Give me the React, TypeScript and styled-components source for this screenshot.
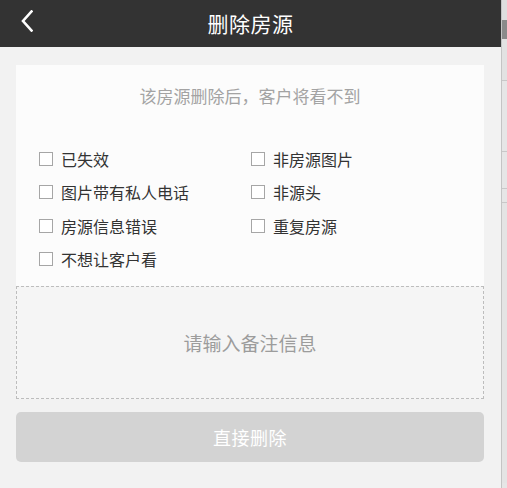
import React from "react";
import styled, { createGlobalStyle } from "styled-components";

const Global = createGlobalStyle`
  html, body { margin: 0; padding: 0; background: #f2f2f2; }
  body { font-family: "Noto Sans CJK SC", "Noto Sans", sans-serif; }
  * { box-sizing: border-box; }
`;

const Frame = styled.div`
  display: flex;
  width: 507px;
  height: 488px;
  overflow: hidden;
`;

const Page = styled.div`
  width: 501px;
  height: 488px;
  background: #f2f2f2;
  display: flex;
  flex-direction: column;
`;

const Strip = styled.div`
  width: 6px;
  height: 488px;
  display: flex;
  flex-direction: column;
  background: #e6e6e6;
  border-left: 1px solid #c4c4c4;
`;

const StripSeg = styled.div<{ $h: number; $bg: string; $line?: boolean }>`
  height: ${(p) => p.$h}px;
  background: ${(p) => p.$bg};
  border-bottom: ${(p) => (p.$line ? "1px solid #c8c8c8" : "none")};
  flex-shrink: 0;
`;

const Header = styled.header`
  height: 47px;
  background: #333333;
  display: flex;
  align-items: center;
  justify-content: center;
  position: relative;
  flex-shrink: 0;
`;

const Back = styled.button`
  position: absolute;
  left: 19px;
  top: 8px;
  width: 16px;
  height: 26px;
  padding: 0;
  border: 0;
  background: transparent;
  display: flex;
  align-items: center;
  justify-content: center;
`;

const Title = styled.h1`
  margin: 0;
  font-size: 21px;
  font-weight: 400;
  color: #ffffff;
  line-height: 47px;
  letter-spacing: 0.5px;
`;

const Body = styled.main`
  padding: 18px 17px 0 16px;
  display: flex;
  flex-direction: column;
`;

const Card = styled.section`
  background: #fcfcfc;
  padding: 19px 23px 10px 23px;
  display: flex;
  flex-direction: column;
`;

const Notice = styled.p`
  margin: 0 0 34px;
  text-align: center;
  font-size: 17px;
  line-height: 24px;
  color: #a3a3a3;
`;

const Options = styled.div`
  display: grid;
  grid-template-columns: 212px 1fr;
  grid-auto-rows: 33.5px;
`;

const Option = styled.label`
  display: flex;
  align-items: center;
  gap: 8px;
  font-size: 16px;
  color: #333333;
  cursor: pointer;
`;

const Box = styled.span`
  width: 14px;
  height: 14px;
  border: 1px solid #a6a6a6;
  background: #ffffff;
  flex-shrink: 0;
`;

const Remark = styled.textarea`
  height: 113px;
  width: 100%;
  background: #f5f5f5;
  border: 1px dashed #bdbdbd;
  resize: none;
  outline: none;
  font-family: inherit;
  font-size: 19px;
  color: #333;
  text-align: center;
  padding: 41px 10px 0;
  line-height: 30px;
  display: block;
  &::placeholder { color: #9c9c9c; }
`;

const Submit = styled.button`
  margin-top: 13px;
  height: 50px;
  width: 100%;
  border: 0;
  border-radius: 5px;
  background: #d3d3d3;
  color: #ffffff;
  font-family: inherit;
  font-size: 18px;
  letter-spacing: 0.5px;
`;

const left = ["已失效", "图片带有私人电话", "房源信息错误", "不想让客户看"];
const right = ["非房源图片", "非源头", "重复房源"];
const items: string[] = [];
for (let i = 0; i < 4; i++) {
  items.push(left[i]);
  if (right[i]) items.push(right[i]);
}

export default function App() {
  return (
    <>
      <Global />
      <Frame>
        <Page>
          <Header>
            <Back aria-label="返回">
              <svg width="12" height="22" viewBox="0 0 12 22">
                <path d="M10.5 1.5 L2 11 L10.5 20.5" fill="none" stroke="#fff" strokeWidth="2.6" strokeLinecap="square" />
              </svg>
            </Back>
            <Title>删除房源</Title>
          </Header>
          <Body>
            <Card>
              <Notice>该房源删除后，客户将看不到</Notice>
              <Options>
                {items.map((t) => (
                  <Option key={t}>
                    <Box />
                    {t}
                  </Option>
                ))}
              </Options>
            </Card>
            <Remark placeholder="请输入备注信息" />
            <Submit>直接删除</Submit>
          </Body>
        </Page>
        <Strip>
          <StripSeg $h={20} $bg="#dedede" />
          <StripSeg $h={19} $bg="#8a8a8a" />
          <StripSeg $h={42} $bg="#e2e2e2" $line />
          <StripSeg $h={71} $bg="#e6e6e6" $line />
          <StripSeg $h={37} $bg="#e6e6e6" $line />
          <StripSeg $h={14} $bg="#e6e6e6" $line />
          <StripSeg $h={280} $bg="#e4e4e4" />
        </Strip>
      </Frame>
    </>
  );
}
